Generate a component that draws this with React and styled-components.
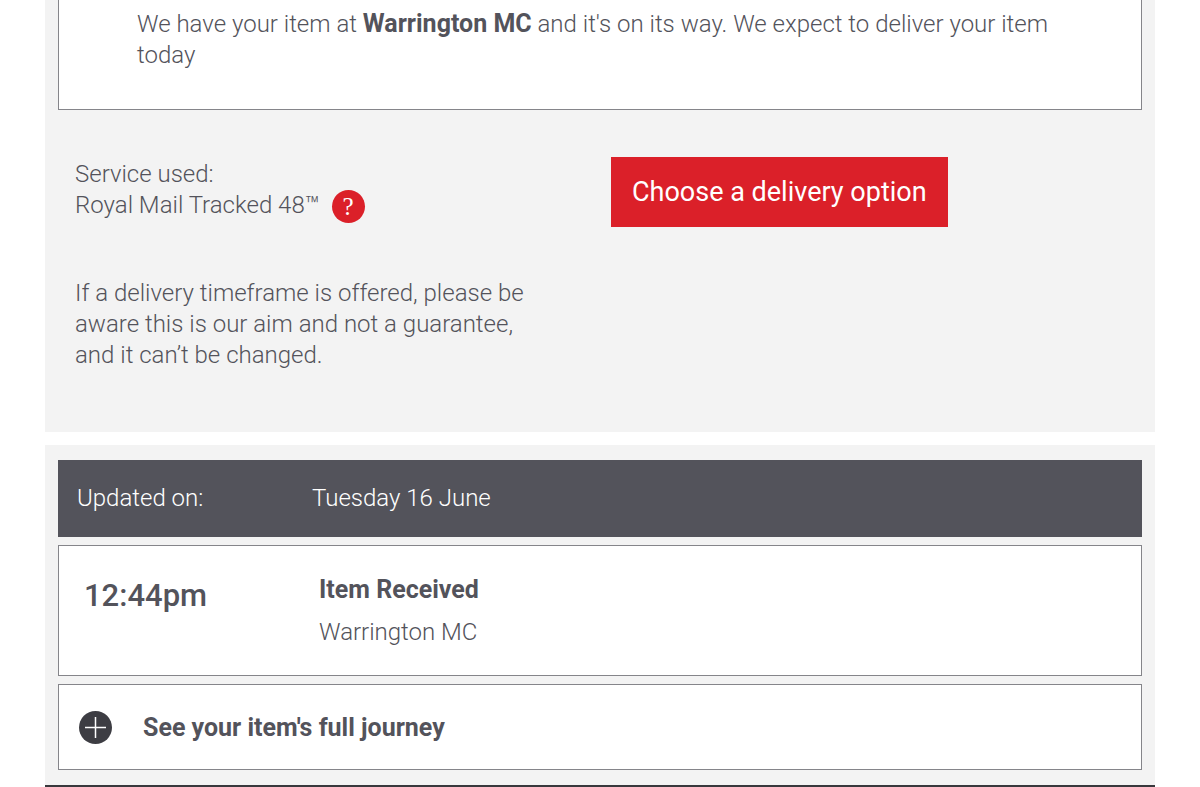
import styled, { createGlobalStyle } from "styled-components";

const GlobalStyle = createGlobalStyle`
  * {
    box-sizing: border-box;
  }

  body {
    margin: 0;
    background-color: white;
    color: #53535b;
    font-family: Roboto, sans-serif;
    font-size: 24px;
    font-weight: 300;
    line-height: 31px;
  }

  p, h3 {
    margin: 0;
  }

  b {
    font-size: 25px;
    font-weight: 700;
  }
`;

const Container = styled.main`
  margin: 0 45px;
  display: flex;
  flex-direction: column;
  gap: 13px;
`;

const Panel = styled.section`
  padding: 0 13px;
  background-color: #f3f3f3;
`;

const StatusBox = styled.div`
  padding: 8px 78px 38px;
  background-color: white;
  border: 1px solid #85858a;
  border-top: none;
`;

const Details = styled.div`
  display: grid;
  grid-template-columns: 1fr 1fr;
  padding: 47px 0 61px;
`;

const Service = styled.div`
  display: flex;
  flex-direction: column;
  gap: 55px;
  padding: 2px 60px 0 17px;
`;

const Product = styled.div`
  display: flex;
  align-items: flex-start;
  gap: 12px;
`;

const HelpButton = styled.button`
  width: 33px;
  height: 33px;
  padding: 0;
  border: none;
  border-radius: 50%;
  background-color: #db2029;
  color: white;
  font-family: "Liberation Serif", serif;
  font-size: 25px;
  line-height: 33px;
  cursor: pointer;
`;

const Action = styled.div`
  padding-left: 11px;
`;

const DeliveryButton = styled.button`
  height: 70px;
  padding: 0 21px;
  border: none;
  background-color: #db2029;
  color: white;
  font-family: inherit;
  font-size: 27px;
  font-weight: 400;
  cursor: pointer;
`;

const Journey = styled(Panel)`
  display: flex;
  flex-direction: column;
  gap: 8px;
  padding: 15px 13px;
  border-bottom: 2px solid #38383c;
`;

const DateBar = styled.div`
  display: grid;
  grid-template-columns: 235px 1fr;
  align-items: center;
  height: 77px;
  padding: 0 19px;
  background-color: #53535b;
  color: white;
`;

const Event = styled.div`
  display: grid;
  grid-template-columns: 235px 1fr;
  padding: 28px 25px 27px;
  background-color: white;
  border: 1px solid #85858a;
`;

const Time = styled.time`
  padding-top: 6px;
  font-size: 31px;
  font-weight: 500;
`;

const EventText = styled.div`
  display: flex;
  flex-direction: column;
  gap: 12px;
`;

const Title = styled.h3`
  font-size: 25px;
  font-weight: 700;
`;

const JourneyButton = styled.button`
  display: flex;
  align-items: center;
  gap: 31px;
  height: 86px;
  padding: 0 20px;
  border: 1px solid #85858a;
  background-color: white;
  color: inherit;
  font-family: inherit;
  font-size: 25px;
  font-weight: 700;
  text-align: left;
  cursor: pointer;
`;

const PlusIcon = () => (
  <svg width="33" height="33" viewBox="0 0 33 33" aria-hidden="true">
    <circle cx="16.5" cy="16.5" r="16.5" fill="#3d3d43" />
    <path d="M6 16.5h21M16.5 6v21" stroke="white" strokeWidth="1.5" />
  </svg>
);

const App = () => {
  return (
    <>
      <GlobalStyle />
      <Container>
        <Panel>
          <StatusBox>
            <p>
              We have your item at <b>Warrington MC</b> and it's on its way. We
              expect to deliver your item today
            </p>
          </StatusBox>
          <Details>
            <Service>
              <div>
                <p>Service used:</p>
                <Product>
                  <span>Royal Mail Tracked 48™</span>
                  <HelpButton type="button">?</HelpButton>
                </Product>
              </div>
              <p>
                If a delivery timeframe is offered, please be aware this is our
                aim and not a guarantee, and it can’t be changed.
              </p>
            </Service>
            <Action>
              <DeliveryButton type="button">
                Choose a delivery option
              </DeliveryButton>
            </Action>
          </Details>
        </Panel>
        <Journey>
          <DateBar>
            <span>Updated on:</span>
            <span>Tuesday 16 June</span>
          </DateBar>
          <Event>
            <Time>12:44pm</Time>
            <EventText>
              <Title>Item Received</Title>
              <p>Warrington MC</p>
            </EventText>
          </Event>
          <JourneyButton type="button">
            <PlusIcon />
            See your item's full journey
          </JourneyButton>
        </Journey>
      </Container>
    </>
  );
};

export default App;
